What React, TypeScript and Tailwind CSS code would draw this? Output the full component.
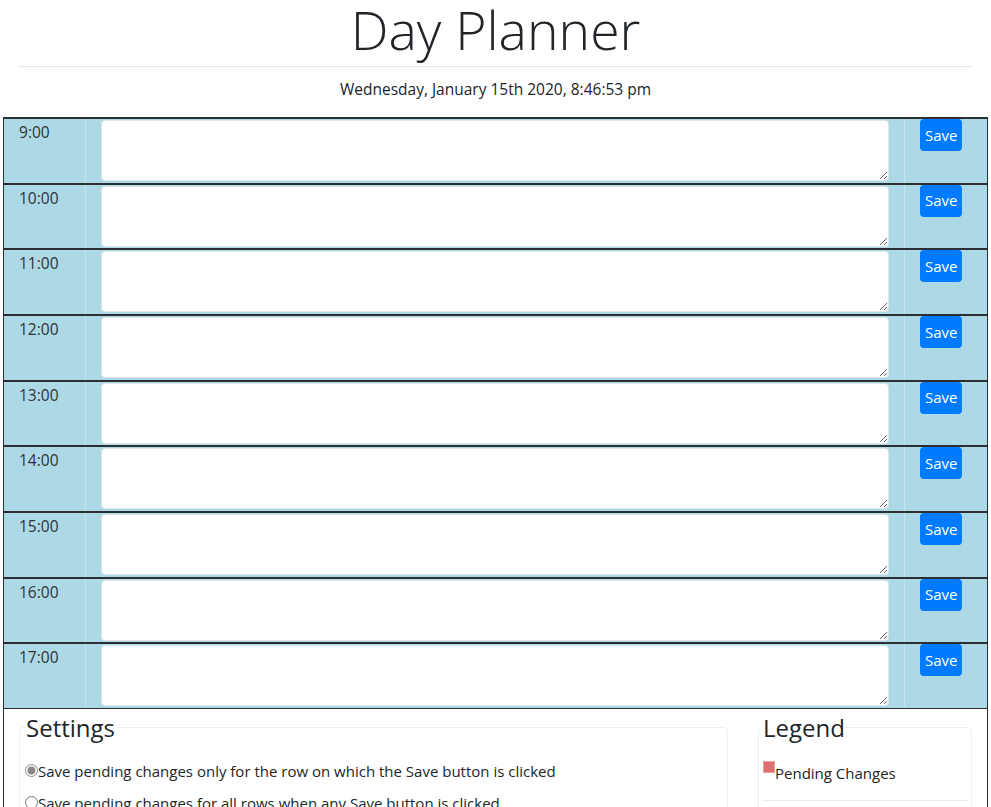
const HOURS = [9, 10, 11, 12, 13, 14, 15, 16, 17];

function HourRow({ hour }: { hour: number }) {
  return (
    <div className="flex h-[65.67px] border-y border-[#2b2f33] bg-[#add8e6]">
      <div className="w-[82px] shrink-0 border-r border-[#c4e3ee] pl-[15px] pt-[2px] text-[15.5px] text-[#333]">
        {hour}:00
      </div>
      <div className="flex-1 pl-[15px] pr-[15px] pt-[1px]">
        <textarea className="block h-[61px] w-full rounded-[4px] border border-[#dfe6ea] bg-white" />
      </div>
      <div className="w-[83px] shrink-0 border-l border-[#c4e3ee] pl-[15px] pt-[0px]">
        <button className="h-[32px] rounded-[4px] bg-[#007bff] px-[5px] text-[15px] text-white">
          Save
        </button>
      </div>
    </div>
  );
}

export default function App() {
  return (
    <div className="min-h-[807px] bg-white font-['Open_Sans',sans-serif] text-[#212529]">
      <header className="px-[18px] text-center">
        <h1 className="text-[53.5px] font-light leading-[60px] text-[#212529]">Day Planner</h1>
        <hr className="mt-[6px] border-[#e6e6e6]" />
        <p className="pb-[17px] pt-[11px] text-[15.5px] leading-[22px]">Wednesday, January 15th 2020, 8:46:53 pm</p>
      </header>

      <main className="mx-[3px] border-x border-t border-[#2b2f33]">
        {HOURS.map((h) => (
          <HourRow key={h} hour={h} />
        ))}

        <div className="flex gap-[30px] px-[15px] pt-[3px]">
          <fieldset className="w-[709px] rounded-[4px] border border-[#eceeef] px-[5px] pb-[8px]">
            <legend className="px-[1px] text-[24px] leading-[32px]">Settings</legend>
            <label className="mt-[11px] flex items-center text-[15px] leading-[32px]">
              <input type="radio" name="save" defaultChecked className="m-0 h-[13px] w-[13px] accent-[#888]" />
              Save pending changes only for the row on which the Save button is clicked
            </label>
            <label className="flex items-center text-[15px] leading-[32px]">
              <input type="radio" name="save" className="m-0 h-[13px] w-[13px]" />
              Save pending changes for all rows when any Save button is clicked
            </label>
          </fieldset>

          <fieldset className="flex-1 rounded-[4px] border border-[#eceeef] px-[3px]">
            <legend className="px-[1px] text-[24px] leading-[32px]">Legend</legend>
            <div className="mt-[17px] flex items-end border-b border-[#e9ecef] pb-[17px] text-[15px] leading-[20px]">
              <span className="mb-[10px] ml-[1px] h-[12px] w-[12px] border border-[#e8a0a0] bg-[#e07070]" />
              Pending Changes
            </div>
            <div className="h-[30px]" />
          </fieldset>
        </div>
      </main>
    </div>
  );
}
